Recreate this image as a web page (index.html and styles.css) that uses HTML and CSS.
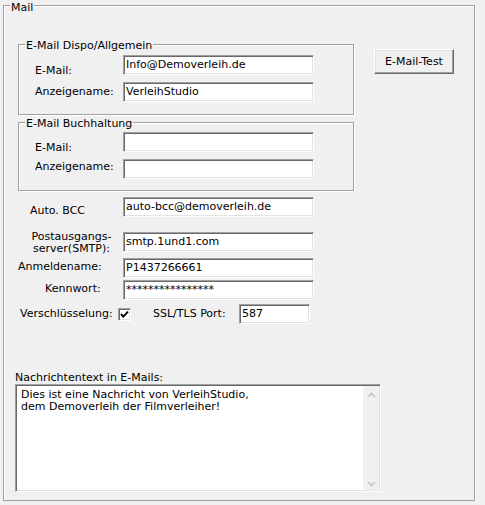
FILE: index.html
```html
<!DOCTYPE html>
<html>
<head>
<meta charset="utf-8">
<link rel="stylesheet" href="styles.css">
</head>
<body>
<div class="outer">
  <span class="legend legend-main">Mail</span>
  <div class="top-row">
    <div class="group g1">
      <span class="legend">E-Mail Dispo/Allgemein</span>
      <div class="row">
        <span class="glbl m9">E-Mail:</span>
        <div class="tb">Info@Demoverleih.de</div>
      </div>
      <div class="row gap7">
        <span class="glbl m3">Anzeigename:</span>
        <div class="tb">VerleihStudio</div>
      </div>
    </div>
    <div class="btn">E-Mail-Test</div>
  </div>

  <div class="group g2">
    <span class="legend">E-Mail Buchhaltung</span>
    <div class="row">
      <span class="glbl m9">E-Mail:</span>
      <div class="tb"></div>
    </div>
    <div class="row gap7">
      <span class="glbl m1">Anzeigename:</span>
      <div class="tb"></div>
    </div>
  </div>

  <div class="row r-bcc">
    <span class="olbl l-bcc">Auto. BCC</span>
    <div class="tb">auto-bcc@demoverleih.de</div>
  </div>
  <div class="row r-post">
    <span class="olbl l-post">Postausgangs-<br>server(SMTP):</span>
    <div class="tb">smtp.1und1.com</div>
  </div>
  <div class="row r-anm">
    <span class="olbl l-anm">Anmeldename:</span>
    <div class="tb">P1437266661</div>
  </div>
  <div class="row r-kenn">
    <span class="olbl l-kenn">Kennwort:</span>
    <div class="tb">****************</div>
  </div>
  <div class="row r-ssl">
    <span class="olbl l-ver">Verschlüsselung:</span>
    <span class="chk"><svg width="11" height="11" viewBox="0 0 11 11"><path d="M2 5 L4.3 7.6 L9 2.6" fill="none" stroke="#000" stroke-width="1.9"/></svg></span>
    <span class="l-ssl">SSL/TLS Port:</span>
    <div class="tb tb-port">587</div>
  </div>

  <div class="msg-lbl">Nachrichtentext in E-Mails:</div>
  <div class="memo">
    <div class="memo-text">Dies ist eine Nachricht von VerleihStudio,<br>dem Demoverleih der Filmverleiher!</div>
    <div class="vscroll">
      <svg width="9" height="6" viewBox="0 0 9 6"><polyline points="1,5 4.5,1.5 8,5" fill="none" stroke="#c4c4c4" stroke-width="1.6"/></svg>
      <svg width="9" height="6" viewBox="0 0 9 6"><polyline points="1,1 4.5,4.5 8,1" fill="none" stroke="#c4c4c4" stroke-width="1.6"/></svg>
    </div>
  </div>
</div>
</body>
</html>
```
FILE: styles.css
```css
body {
  margin: 0;
  background: #f0f0f0;
  font-family: "DejaVu Sans", sans-serif;
  font-size: 11px;
  line-height: 13px;
  color: #000;
}

.outer {
  position: relative;
  margin: 5px 0 0 3px;
  width: 472px;
  height: 496px;
  box-sizing: border-box;
  border: 1px solid #a0a0a0;
  box-shadow: inset 1px 1px 0 #fff, 1px 1px 0 #fff;
  padding: 38px 0 0 14px;
}

.legend {
  position: absolute;
  top: -6px;
  left: 6px;
  padding: 0 1px;
  background: #f0f0f0;
  white-space: nowrap;
}

.legend-main {
  top: -5px;
}

.top-row {
  display: flex;
  align-items: flex-start;
}

.group {
  position: relative;
  width: 336px;
  box-sizing: border-box;
  border: 1px solid #a0a0a0;
  box-shadow: inset 1px 1px 0 #fff, 1px 1px 0 #fff;
}

.g1 {
  padding: 10px 0 12px;
}

.g2 {
  margin-top: 7px;
  padding: 9px 0 11px;
}

.row {
  display: flex;
  height: 20px;
}

.gap7 {
  margin-top: 7px;
}

.glbl {
  box-sizing: border-box;
  width: 104px;
  padding-left: 16px;
  white-space: nowrap;
}

.m9 { margin-top: 9px; }
.m3 { margin-top: 3px; }
.m1 { margin-top: 1px; }

.tb {
  box-sizing: border-box;
  width: 191px;
  height: 20px;
  background: #fff;
  border-top: 1px solid #a0a0a0;
  border-left: 1px solid #a0a0a0;
  border-bottom: 1px solid #fff;
  border-right: 1px solid #fff;
  box-shadow: inset 1px 1px 0 #696969, inset -1px -1px 0 #e3e3e3;
  padding: 2px 0 0 2px;
  white-space: nowrap;
  overflow: hidden;
}

.btn {
  box-sizing: border-box;
  margin: 5px 0 0 20px;
  width: 80px;
  height: 25px;
  border-top: 1px solid #fff;
  border-left: 1px solid #fff;
  border-bottom: 1px solid #696969;
  border-right: 1px solid #696969;
  box-shadow: inset -1px -1px 0 #a0a0a0, inset 1px 1px 0 #e3e3e3;
  display: flex;
  align-items: center;
  justify-content: center;
  padding-bottom: 1px;
}

.olbl {
  box-sizing: border-box;
  width: 105px;
  white-space: nowrap;
}

.r-bcc { margin-top: 6px; }
.l-bcc { padding-left: 12px; margin-top: 7px; }

.r-post { margin-top: 15px; }
.l-post {
  line-height: 12px;
  margin-top: -1px;
  text-align: center;
  padding-right: 6px;
  padding-left: 8px;
}

.r-anm { margin-top: 6px; }
.l-anm { margin-top: 2px; }

.r-kenn { margin-top: 2px; }
.l-kenn { padding-left: 27px; margin-top: 2px; }

.r-ssl { margin-top: 4px; }
.l-ver { width: 100px; padding-left: 2px; margin-top: 3px; }

.chk {
  box-sizing: border-box;
  width: 13px;
  height: 13px;
  margin-top: 4px;
  background: #fff;
  border-top: 1px solid #a0a0a0;
  border-left: 1px solid #a0a0a0;
  border-bottom: 1px solid #fff;
  border-right: 1px solid #fff;
  box-shadow: inset 1px 1px 0 #696969, inset -1px -1px 0 #e3e3e3;
  display: flex;
}

.l-ssl {
  box-sizing: border-box;
  width: 108px;
  padding-left: 22px;
  margin-top: 3px;
  white-space: nowrap;
}

.tb-port {
  width: 71px;
}

.msg-lbl {
  margin: 48px 0 0 -3px;
  line-height: 12px;
  white-space: nowrap;
}

.memo {
  display: flex;
  margin-left: -3px;
  box-sizing: border-box;
  width: 366px;
  height: 108px;
  background: #fff;
  border-top: 1px solid #a0a0a0;
  border-left: 1px solid #a0a0a0;
  border-bottom: 1px solid #fff;
  border-right: 1px solid #fff;
  box-shadow: inset 1px 1px 0 #696969, inset -1px -1px 0 #e3e3e3;
  padding: 2px 1px 1px 2px;
}

.memo-text {
  flex: 1;
  padding: 2px 0 0 3px;
  line-height: 12px;
  white-space: nowrap;
}

.vscroll {
  width: 16px;
  background: #f0f0f0;
  display: flex;
  flex-direction: column;
  justify-content: space-between;
  align-items: center;
  padding: 6px 0 3px;
  margin-top: -1px;
}
```
